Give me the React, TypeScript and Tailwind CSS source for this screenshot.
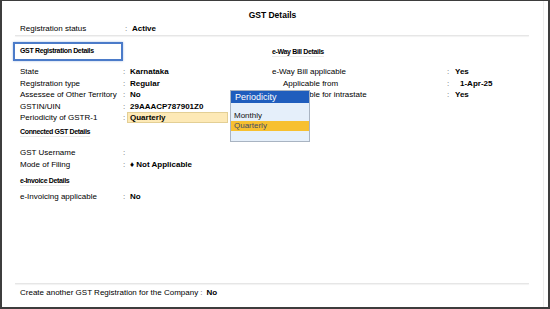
const font = { fontFamily: '"Liberation Sans", Arial, sans-serif' };

const Heading = ({ children }: { children: string }) => (
  <div
    className="h-[10px] leading-[10px] text-[7px] font-bold tracking-[-0.35px] text-black"
    style={{ fontFamily: '"Liberation Sans Narrow", "Liberation Sans", Arial, sans-serif' }}
  >
    <span className="border-b border-[#ececec] pb-[1px]">{children}</span>
  </div>
);

const Row = ({ label, value, bold = true }: { label: string; value: string; bold?: boolean }) => (
  <div className="flex h-[11.5px] items-center leading-[11.5px]">
    <div className="w-[103px] shrink-0 text-black">{label}</div>
    <div className="w-[4px] shrink-0 text-[#666]">:</div>
    <div className={`pl-[3px] text-black ${bold ? 'font-bold' : ''}`}>{value}</div>
  </div>
);

const RightRow = ({ label, value, indent = false, valueIndent = false }: { label: string; value: string; indent?: boolean; valueIndent?: boolean }) => (
  <div className="flex h-[11.5px] items-center leading-[11.5px]">
    <div className={`w-[175px] shrink-0 text-black ${indent ? 'pl-[11px]' : ''}`}>{label}</div>
    <div className="w-[8px] shrink-0 text-[#666]">:</div>
    <div className={`font-bold text-black ${valueIndent ? 'pl-[5px]' : ''}`}>{value}</div>
  </div>
);

export default function App() {
  return (
    <div
      className="relative w-[550px] h-[309px] overflow-hidden border-t border-l-2 border-r-2 border-b-2 border-[#3d3d3d] bg-white text-[8px]"
      style={font}
    >
      <div className="mr-[4px] flex h-full flex-col border-r border-[#ececec]">
        {/* title */}
        <div className="mt-[8px] h-[12px] text-center text-[8.5px] font-bold leading-[12px] text-black">GST Details</div>

        {/* registration status */}
        <div className="mt-[2px] flex h-[12px] items-center pl-[18px] leading-[12px]">
          <div className="w-[105px] text-black">Registration status</div>
          <div className="w-[7px] text-[#666]">:</div>
          <div className="font-bold text-black">Active</div>
        </div>
        <div className="ml-[13px] mr-[14px] h-[1px] bg-[#e6e6e6] shadow-[0_1px_1px_rgba(0,0,0,0.06)]" />

        {/* columns */}
        <div className="flex">
          {/* left */}
          <div className="w-[268px] shrink-0">
            <div className="ml-[11px] mt-[6px] flex h-[19px] w-[110px] items-center border-2 border-[#4b7bc9] pl-[5px] shadow-[0_0_2px_rgba(75,123,201,0.5)]">
              <span
                className="text-[7px] font-bold tracking-[-0.35px] text-black"
                style={{ fontFamily: '"Liberation Sans Narrow", "Liberation Sans", Arial, sans-serif' }}
              >
                GST Registration Details
              </span>
            </div>

            <div className="mt-[5px] pl-[18px]">
              <Row label="State" value="Karnataka" />
              <Row label="Registration type" value="Regular" />
              <Row label="Assessee of Other Territory" value="No" />
              <Row label="GSTIN/UIN" value="29AAACP787901Z0" />
              <div className="flex h-[11.5px] items-center leading-[11.5px]">
                <div className="w-[103px] shrink-0 text-black">Periodicity of GSTR-1</div>
                <div className="w-[4px] shrink-0 text-[#666]">:</div>
                <div className="h-[11px] w-[101px] border border-[#e3cf95] bg-[#fde9b6] pl-[2px] font-bold leading-[9px] text-black">
                  Quarterly
                </div>
              </div>
            </div>

            <div className="mt-[3.5px] pl-[18px]">
              <Heading>Connected GST Details</Heading>
            </div>

            <div className="mt-[10px] pl-[18px]">
              <Row label="GST Username" value="" />
              <Row label="Mode of Filing" value={'\u2666 Not Applicable'} />
            </div>

            <div className="mt-[6px] pl-[18px]">
              <Heading>e-Invoice Details</Heading>
            </div>

            <div className="mt-[5px] pl-[18px]">
              <Row label="e-Invoicing applicable" value="No" />
            </div>
          </div>

          {/* right */}
          <div className="flex-1">
            <div className="mt-[11px] pl-[2px]">
              <Heading>e-Way Bill Details</Heading>
            </div>
            <div className="mt-[9.25px] pl-[2px]">
              <RightRow label="e-Way Bill applicable" value="Yes" />
              <RightRow label="Applicable from" value="1-Apr-25" indent valueIndent />
              <RightRow label="Applicable for intrastate" value="Yes" indent />
            </div>
          </div>
        </div>

        {/* footer */}
        <div className="mt-auto">
          <div className="ml-[13px] mr-[14px] h-[1px] bg-[#e6e6e6] shadow-[0_1px_1px_rgba(0,0,0,0.06)]" />
          <div className="mb-[8px] mt-[3px] flex h-[12px] items-center pl-[18px] leading-[12px]">
            <span className="text-black">Create another GST Registration for the Company</span>
            <span className="ml-[2px] mr-[4px] text-[#666]">:</span>
            <span className="font-bold text-black">No</span>
          </div>
        </div>
      </div>

      {/* periodicity popup */}
      <div className="absolute left-[228px] top-[89px] flex h-[52px] w-[80px] flex-col border border-[#a9b4c2] bg-[#e5effa]">
        <div className="h-[12px] bg-[#1f5dbd] pl-[4px] text-[9px] leading-[12px] text-white">Periodicity</div>
        <div className="mt-[8px] h-[10px] pl-[3px] leading-[10px] text-[#111]">Monthly</div>
        <div className="h-[10px] bg-[#f7c030] pl-[3px] leading-[10px] text-[#3e4c6a]">Quarterly</div>
      </div>
    </div>
  );
}
